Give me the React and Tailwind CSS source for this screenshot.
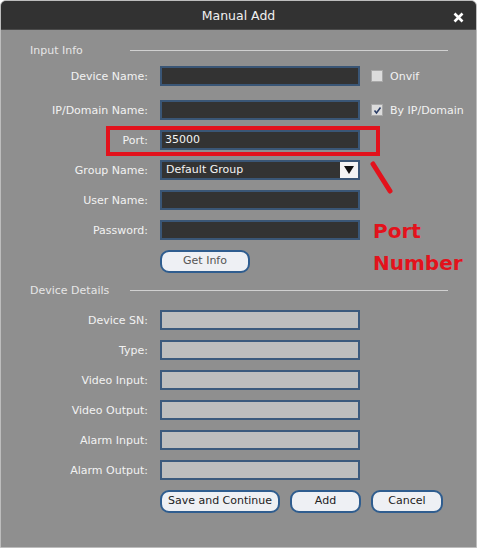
import React from "react";

const font = { fontFamily: '"DejaVu Sans", Verdana, sans-serif' };

function Label({ children }) {
  return (
    <div className="w-[148px] shrink-0 text-right text-[11px] leading-none text-[#f2f2f2] pr-[1px]">
      {children}
    </div>
  );
}

function DarkInput({ value }) {
  return (
    <div className="w-[200px] h-[20px] bg-[#333333] border-2 border-[#3a5676] flex items-center px-[3px] text-[11px] text-[#f4f4f4]">
      {value}
    </div>
  );
}

function LightInput() {
  return <div className="w-[200px] h-[20px] bg-[#bebebe] border-2 border-[#3c5a7d]" />;
}

function Row({ label, children, extra, className = "" }) {
  return (
    <div className={"flex items-center h-[20px] " + className}>
      <Label>{label}</Label>
      <div className="ml-[11px]">{children}</div>
      {extra}
    </div>
  );
}

function Check({ checked, label }) {
  return (
    <div className="flex items-center ml-[11px]">
      <div className="w-[12px] h-[12px] bg-[#dcdcdc] border border-[#a8a8a8] flex items-center justify-center">
        {checked && (
          <svg width="9" height="9" viewBox="0 0 9 9">
            <path d="M1.5 4.5 L3.5 7 L7.5 1.5" stroke="#2b3d66" strokeWidth="1.6" fill="none" />
          </svg>
        )}
      </div>
      <span className="ml-[7px] text-[11px] text-[#f2f2f2] leading-none">{label}</span>
    </div>
  );
}

function Section({ title }) {
  return (
    <div className="flex items-center h-[14px] pl-[29px] pr-[28px]">
      <span className="w-[100px] text-[11px] text-[#e6e6e6] leading-none">{title}</span>
      <div className="flex-1 h-px bg-[#d0d0d0]" />
    </div>
  );
}

function Btn({ children, w }) {
  return (
    <div
      className={
        "h-[23px] rounded-[9px] border-2 border-[#2f5d8f] bg-[#eef0f4] flex items-center justify-center text-[11px] text-[#222] " +
        w
      }
    >
      {children}
    </div>
  );
}

export default function App() {
  return (
    <div style={font} className="w-[479px] h-[548px] bg-white">
      <div className="relative w-[477px] h-[548px] rounded-t-[6px] border border-[#bdbdbd] bg-[#8f8f8f] overflow-hidden">
        <div className="h-[29px] pt-[3px] bg-[#323232] border-b border-[#4a4a4a] flex items-center justify-center relative">
          <span className="text-[12.5px] text-[#f0f0f0]">Manual Add</span>
          <svg className="absolute right-[12px] top-[11px]" width="11" height="11" viewBox="0 0 11 11">
            <path d="M1.5 1.5 L9.5 9.5 M9.5 1.5 L1.5 9.5" stroke="#ffffff" strokeWidth="2.6" />
          </svg>
        </div>

        <div className="pt-[13px]">
          <Section title="Input Info" />
          <div className="mt-[9px] flex flex-col">
            <Row label="Device Name:" extra={<Check label="Onvif" />}>
              <DarkInput />
            </Row>
            <Row label="IP/Domain Name:" className="mt-[14px]" extra={<Check checked label="By IP/Domain" />}>
              <DarkInput />
            </Row>
            <Row label="Port:" className="mt-[10px]">
              <DarkInput value="35000" />
            </Row>
            <Row label="Group Name:" className="mt-[10px]">
              <div className="w-[200px] h-[20px] bg-[#333333] border-2 border-[#3a5676] flex items-center text-[11px] text-[#f4f4f4]">
                <span className="flex-1 pl-[4px]">Default Group</span>
                <div className="w-[18px] h-full bg-[#f4f4f4] flex items-center justify-center">
                  <svg width="10" height="8" viewBox="0 0 10 8">
                    <path d="M0 0 H10 L5 8 Z" fill="#111" />
                  </svg>
                </div>
              </div>
            </Row>
            <Row label="User Name:" className="mt-[10px]">
              <DarkInput />
            </Row>
            <Row label="Password:" className="mt-[10px]">
              <DarkInput />
            </Row>
            <div className="mt-[10px] pl-[159px]">
              <Btn w="w-[90px]">
                <span className="text-[#555]">Get Info</span>
              </Btn>
            </div>
          </div>

          <div className="mt-[10px]">
            <Section title="Device Details" />
          </div>
          <div className="mt-[13px] flex flex-col gap-[10px]">
            <Row label="Device SN:"><LightInput /></Row>
            <Row label="Type:"><LightInput /></Row>
            <Row label="Video Input:"><LightInput /></Row>
            <Row label="Video Output:"><LightInput /></Row>
            <Row label="Alarm Input:"><LightInput /></Row>
            <Row label="Alarm Output:"><LightInput /></Row>
          </div>
          <div className="mt-[10px] pl-[159px] flex gap-[10px]">
            <Btn w="w-[120px]">Save and Continue</Btn>
            <Btn w="w-[71px]">Add</Btn>
            <Btn w="w-[72px]">Cancel</Btn>
          </div>
        </div>

        {/* annotation overlay */}
        <div className="absolute left-[105px] top-[125px] w-[274px] h-[30px] border-[4px] border-[#e3121c]" />
        <svg className="absolute left-[368px] top-[160px]" width="26" height="34" viewBox="0 0 26 34">
          <path d="M4 3 L21 30" stroke="#e3121c" strokeWidth="5" strokeLinecap="round" />
        </svg>
        <div className="absolute left-[372px] top-[214px] text-[#e3121c] font-bold text-[20px] leading-[32px]">
          <div>Port</div>
          <div>Number</div>
        </div>
      </div>
    </div>
  );
}
